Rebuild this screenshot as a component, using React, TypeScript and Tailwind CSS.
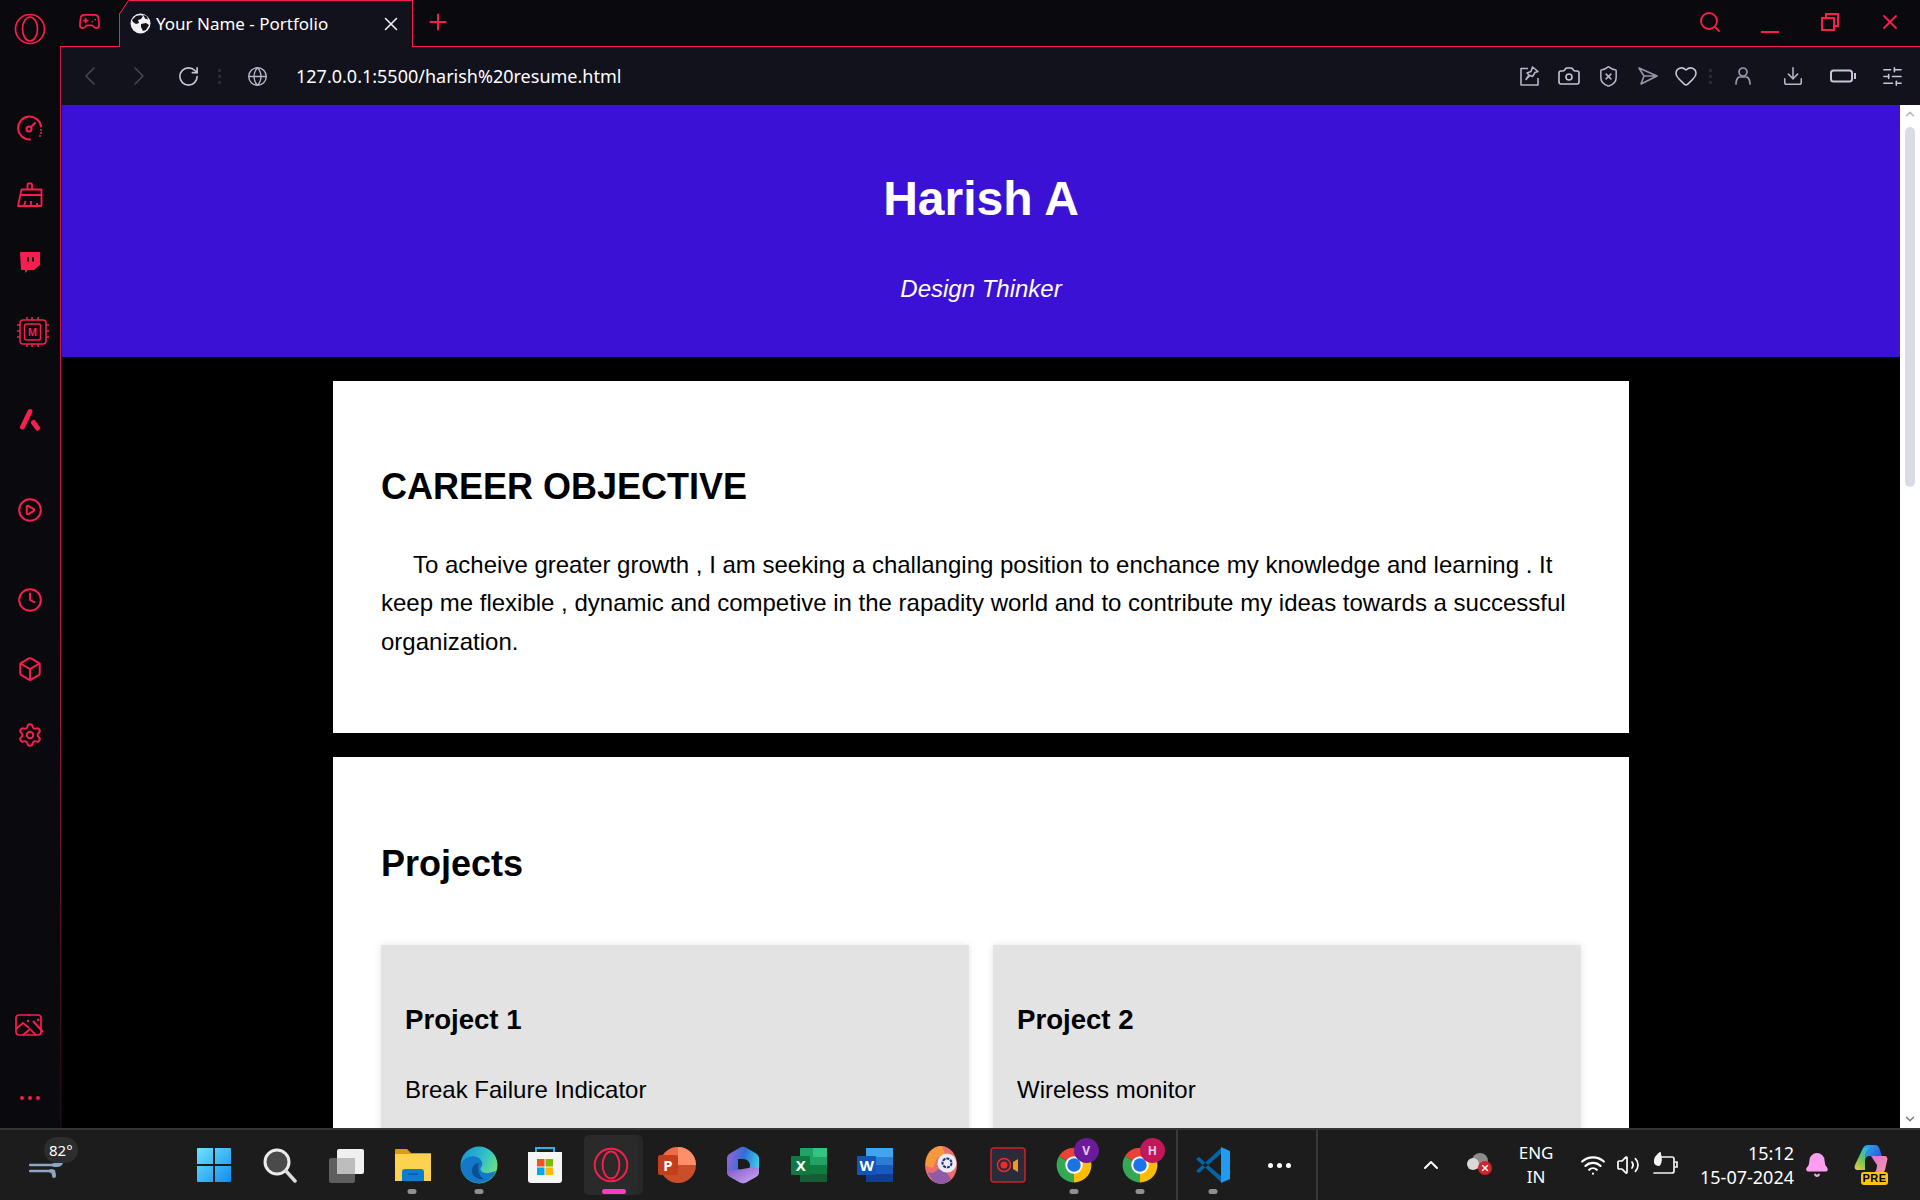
import React from 'react';
import {
  Clock, Box, Settings, CirclePlay, Camera, ShieldX, Heart, Download, SlidersHorizontal,
  ChevronLeft, ChevronRight, RotateCw, Globe, X, Plus, Search, Gamepad2, ChevronUp, ChevronDown,
  Wifi, Volume2, Bell,
} from 'lucide-react';

const RED = '#fa1e4e';

const OperaLogo: React.FC<{ size?: number }> = ({ size = 32 }) => (
  <svg width={size} height={size} viewBox="0 0 32 32" fill="none" stroke={RED} strokeWidth="1.7">
    <circle cx="16" cy="16" r="14.5" />
    <ellipse cx="16" cy="16" rx="7.5" ry="12" />
  </svg>
);

const GaugeIcon = () => (
  <svg width="26" height="26" viewBox="0 0 26 26" fill="none" stroke={RED} strokeWidth="2" strokeLinecap="round">
    <path d="M24 11.500A11.500 11.500 0 1 0 13 24.500" />
    <circle cx="12" cy="14" r="2.500" />
    <path d="M14 12l4-4" />
    <path d="M24 15v.1M24 18v.1M23 21v.1" />
  </svg>
);

const Brush = () => (
  <svg width="26" height="26" viewBox="0 0 26 26" fill="none" stroke={RED} strokeWidth="1.800" strokeLinejoin="round">
    <path d="M10.500 7V2.500a1 1 0 0 1 1-1h2.500a1 1 0 0 1 1 1V7" />
    <path d="M4.500 7.500H24.500V23a1 1 0 0 1-1 1H1z" />
    <path d="M4 13h20M7 24l1.500-5M14 24v-5M20 24v-3" />
  </svg>
);

const TwitchIcon = () => (
  <svg width="24" height="24" viewBox="0 0 24 24">
    <path fill={RED} d="M2 2h20v13l-6 5h-6l-3 3v-3H3z" />
    <path stroke="#09090e" strokeWidth="2" d="M10 7v4.500M15 7v4.500" />
  </svg>
);

const ChipIcon = () => (
  <div className="relative ml-[5px] w-[32px] h-[30px] flex items-center justify-center">
    <svg className="absolute inset-0" width="32" height="30" viewBox="0 0 32 30" fill="none" stroke={RED} strokeWidth="1.500">
      <rect x="3" y="3" width="26" height="24" rx="3" />
      <rect x="7.500" y="7" width="16" height="16" rx="2" />
      <path d="M10 0v3M15 0v3M21 0v3M10 27v3M15 27v3M21 27v3M0 8h3M0 14h3M0 20h3M29 8h3M29 14h3M29 20h3" />
    </svg>
    <span className="relative text-[10px] font-bold text-[#fa1e4e] leading-none">M</span>
  </div>
);

const AriaIcon = () => (
  <svg width="24" height="24" viewBox="0 0 24 24" fill="none" stroke={RED} strokeWidth="5" strokeLinecap="round">
    <path d="M12 3.500 4.500 19" />
    <path d="M15.500 14.500 19.500 20" />
  </svg>
);

const GalleryIcon = () => (
  <svg width="30" height="24" viewBox="0 0 30 24" fill="none" stroke={RED} strokeWidth="1.700" strokeLinejoin="round">
    <rect x="1" y="2" width="25" height="20" rx="3" />
    <path d="M1 16l7-6 6 5M8 22l7-6 6 6" />
    <path d="M18 8l10 11" strokeWidth="2" />
    <circle cx="14" cy="2" r="1" fill={RED} stroke="none" />
    <circle cx="23" cy="7" r="1.200" fill={RED} stroke="none" />
    <circle cx="13" cy="8" r="1.200" fill={RED} stroke="none" />
  </svg>
);

const Rail = () => (
  <div className="w-[62px] shrink-0 flex bg-[#09090e]">
    <div className="w-[60px] flex flex-col items-center text-[#fa1e4e]">
      <div className="mt-[69px] h-[24px] flex items-center"><GaugeIcon /></div>
      <div className="mt-[43px] h-[24px] flex items-center"><Brush /></div>
      <div className="mt-[43px] h-[24px] flex items-center"><TwitchIcon /></div>
      <div className="mt-[46px] h-[24px] flex items-center"><ChipIcon /></div>
      <div className="mt-[64px] h-[24px] flex items-center"><AriaIcon /></div>
      <div className="mt-[66px] h-[24px] flex items-center"><CirclePlay size={26} strokeWidth={1.8} /></div>
      <div className="mt-[66px] h-[24px] flex items-center"><Clock size={26} strokeWidth={1.8} /></div>
      <div className="mt-[45px] h-[24px] flex items-center"><Box size={26} strokeWidth={1.8} /></div>
      <div className="mt-[42px] h-[24px] flex items-center"><Settings size={26} strokeWidth={1.8} /></div>
      <div className="mt-[266px] h-[24px] flex items-center"><GalleryIcon /></div>
      <div className="mt-[49px] h-[24px] flex items-center gap-[4px]">
        <span className="w-[4px] h-[4px] rounded-full bg-[#fa1e4e]" />
        <span className="w-[4px] h-[4px] rounded-full bg-[#fa1e4e]" />
        <span className="w-[4px] h-[4px] rounded-full bg-[#fa1e4e]" />
      </div>
    </div>
    <div className="w-px bg-gradient-to-b from-[#c8173f] via-[#c8173f] to-[#1a0a12]" />
  </div>
);

const TabGlobe = () => (
  <svg width="21" height="21" viewBox="0 0 21 21">
    <circle cx="10.500" cy="10.500" r="10" fill="#f1f1f3" />
    <path fill="#12121c" d="M6 3c3-1 6-1 7 0l-2 3-3 1 1 3-3 1-3-2-1-2zM11 11l5-1 3 2-3 5-3 1-2-4zM13 1.500l4 2 1 3-3-1z" />
  </svg>
);

const TopBar = () => (
  <div className="h-[47px] flex bg-[#09090e] shrink-0">
    <div className="w-[60px] shrink-0 pt-[13px] pl-[14px]"><OperaLogo /></div>
    <div className="flex-1 flex border-b border-[#fa1e4e]">
      <div className="w-[59px] shrink-0 flex justify-center pt-[10px]">
        <Gamepad2 size={23} strokeWidth={1.8} className="text-[#fa1e4e]" />
      </div>
      <div className="relative w-[294px] h-[47px] shrink-0 flex items-center bg-[#12121c] border-l border-r border-t border-[#fa1e4e] pb-[1px] pl-[10px] pr-[10px] font-['Noto_Sans',sans-serif]">
        <svg className="absolute -left-px -top-px" width="11" height="15" viewBox="0 0 11 15">
          <path d="M0 0h10L0 14z" fill="#09090e" />
          <path d="M.5 14 9.500.5" stroke={RED} fill="none" />
        </svg>
        <TabGlobe />
        <span className="ml-[5px] text-[17px] text-white leading-none flex-1 whitespace-nowrap">Your Name - Portfolio</span>
        <X size={22} strokeWidth={1.7} className="text-[#f1f1f3]" />
      </div>
      <div className="w-[49px] shrink-0 flex justify-center pt-[9px]">
        <Plus size={26} strokeWidth={1.8} className="text-[#fa1e4e]" />
      </div>
      <div className="flex-1" />
      <div className="flex items-center pb-[2px] text-[#fa1e4e] pr-[18px] gap-[36px]">
        <Search size={24} strokeWidth={1.8} />
        <div className="w-[24px] h-[24px] flex items-end justify-center pb-[1px]"><div className="w-[18px] h-[2px] bg-[#fa1e4e]" /></div>
        <svg width="24" height="24" viewBox="0 0 24 24" fill="none" stroke={RED} strokeWidth="2">
          <rect x="4" y="8" width="12" height="12" />
          <path d="M8 8V4h12v12h-4" />
        </svg>
        <X size={24} strokeWidth={1.8} />
      </div>
    </div>
  </div>
);

const PinIcon = () => (
  <svg width="22" height="22" viewBox="0 0 22 22" fill="none" stroke="#b9b3c8" strokeWidth="1.600" strokeLinejoin="round">
    <path d="M9 3.500H2v16.500h17v-7" />
    <path d="M13.500 2l5.500 4.500-3 1-2.500 4-2.500-1-4 4 3-4.500-2-2 4-1.500z" />
  </svg>
);

const SendIcon = () => (
  <svg width="22" height="22" viewBox="0 0 22 22" fill="none" stroke="#9b95aa" strokeWidth="1.600" strokeLinejoin="round">
    <path d="M2 3l18 8-16 8 3-8zM7 11h13" />
  </svg>
);

const PersonIcon = () => (
  <svg width="18" height="20" viewBox="0 0 18 20" fill="none" stroke="#9b95aa" strokeWidth="1.700">
    <circle cx="9" cy="6" r="4" />
    <path d="M2 18c0-5 3-7 3-7h8s3 2 3 7" strokeLinecap="round" />
  </svg>
);

const BatteryOutline = () => (
  <svg width="26" height="14" viewBox="0 0 26 14" fill="none" stroke="#c9c4d6" strokeWidth="2">
    <rect x="1" y="1.500" width="21" height="11" rx="2.500" />
    <path d="M25 4v6" />
  </svg>
);

const DotSep = () => (
  <div className="flex flex-col gap-[3px]">
    <span className="w-[3px] h-[3px] bg-[#2a2a36]" />
    <span className="w-[3px] h-[3px] bg-[#2a2a36]" />
    <span className="w-[3px] h-[3px] bg-[#2a2a36]" />
  </div>
);

const AddressBar = () => (
  <div className="h-[58px] shrink-0 flex items-center bg-[#12121c] text-[#b9b3c8]">
    <ChevronLeft size={32} strokeWidth={1.2} className="ml-[12px] text-[#4a4754]" />
    <ChevronRight size={32} strokeWidth={1.2} className="ml-[17px] text-[#4a4754]" />
    <RotateCw size={23} strokeWidth={1.7} className="ml-[22px] text-[#c9c4d6]" />
    <div className="ml-[18px]"><DotSep /></div>
    <Globe size={21} strokeWidth={1.6} className="ml-[26px]" />
    <span className="ml-[28px] text-[18px] leading-none text-white font-['Noto_Sans',sans-serif] whitespace-nowrap">127.0.0.1:5500/harish%20resume.html</span>
    <div className="flex-1" />
    <PinIcon />
    <Camera size={24} strokeWidth={1.6} className="ml-[16px] text-[#c9c4d6]" />
    <ShieldX size={23} strokeWidth={1.6} className="ml-[16px]" />
    <div className="ml-[17px]"><SendIcon /></div>
    <Heart size={24} strokeWidth={1.6} className="ml-[15px] text-[#c9c4d6]" />
    <div className="ml-[11px]"><DotSep /></div>
    <div className="ml-[22px]"><PersonIcon /></div>
    <Download size={22} strokeWidth={1.7} className="ml-[30px]" />
    <div className="ml-[26px]"><BatteryOutline /></div>
    <SlidersHorizontal size={23} strokeWidth={1.6} className="ml-[25px] mr-[16px] text-[#c9c4d6]" />
  </div>
);

const ProjectCard: React.FC<{ title: string; text: string }> = ({ title, text }) => (
  <div className="bg-[#e3e3e3] shadow-[0_0_8px_rgba(0,0,0,0.1)] pt-[59px] px-[24px] pb-[48px]">
    <h3 className="text-[27.6px] leading-[32px] font-bold">{title}</h3>
    <p className="mt-[35px] text-[24px] leading-[38.4px]">{text}</p>
  </div>
);

const Page = () => (
  <div className="flex-1 min-w-0 overflow-hidden bg-black text-black font-['Liberation_Sans',Arial,sans-serif]">
    <header className="h-[252px] bg-[#3c11d6] text-white text-center pt-[66px]">
      <h1 className="text-[48px] leading-[55px] font-bold">Harish A</h1>
      <p className="mt-[49px] text-[24px] leading-[27px] italic">Design Thinker</p>
    </header>
    <main className="w-[1296px] mx-auto pt-[24px]">
      <section className="h-[352px] bg-white px-[48px] pt-[85px]">
        <h2 className="text-[36px] leading-[41px] font-bold">CAREER OBJECTIVE</h2>
        <p className="mt-[39px] text-[24px] leading-[38.4px] indent-[32px]">
          To acheive greater growth , I am seeking a challanging position to enchance my knowledge and learning . It keep me flexible , dynamic and competive in the rapadity world and to contribute my ideas towards a successful organization.
        </p>
      </section>
      <section className="mt-[24px] bg-white px-[48px] pt-[86px] pb-[48px]">
        <h2 className="text-[36px] leading-[41px] font-bold">Projects</h2>
        <div className="mt-[61px] grid grid-cols-2 gap-[24px]">
          <ProjectCard title="Project 1" text="Break Failure Indicator" />
          <ProjectCard title="Project 2" text="Wireless monitor" />
        </div>
      </section>
    </main>
  </div>
);

const Scrollbar = () => (
  <div className="w-[20px] shrink-0 bg-white flex flex-col items-center">
    <ChevronUp size={14} strokeWidth={2.5} className="mt-[2px] text-[#b5b5b5]" />
    <div className="mt-[6px] w-[10px] h-[360px] rounded-full bg-[#dadce3]" />
    <div className="flex-1" />
    <ChevronDown size={14} strokeWidth={2.5} className="mb-[2px] text-[#7a7a7a]" />
  </div>
);

/* taskbar icons */
const WinLogo = () => (
  <svg width="36" height="36" viewBox="0 0 36 36">
    <defs>
      <linearGradient id="win" x1="0" y1="0" x2="1" y2="1">
        <stop offset="0" stopColor="#6fe3fb" />
        <stop offset="1" stopColor="#0f8df0" />
      </linearGradient>
    </defs>
    <path fill="url(#win)" d="M1 2a1 1 0 0 1 1-1h15v16H1zM19 1h15a1 1 0 0 1 1 1v15H19zM1 19h16v16H2a1 1 0 0 1-1-1zM19 19h16v15a1 1 0 0 1-1 1H19z" />
  </svg>
);

const TaskSearch = () => (
  <svg width="36" height="36" viewBox="0 0 36 36" fill="none">
    <circle cx="15" cy="15" r="12" fill="#4a4a4a" stroke="#ececec" strokeWidth="3" />
    <path d="M24 24l9 10" stroke="#dcdcdc" strokeWidth="3.500" strokeLinecap="round" />
  </svg>
);

const TaskView = () => (
  <svg width="36" height="36" viewBox="0 0 36 36">
    <rect x="1" y="11" width="26" height="25" rx="2" fill="#5e5e5e" />
    <rect x="9" y="2" width="27" height="25" rx="2" fill="#f0f0f0" />
    <rect x="9" y="11" width="18" height="16" fill="#bdbdbd" />
  </svg>
);

const Explorer = () => (
  <svg width="38" height="34" viewBox="0 0 38 34" className="ml-[2px]">
    <path fill="#d99c0f" d="M1 2a1 1 0 0 1 1-1h11l4 4h20v6H1z" />
    <path fill="#fdd24f" d="M1 6h36v27H1z" />
    <path fill="#0f7ccc" d="M8 33V24a3 3 0 0 1 3-3h16a3 3 0 0 1 3 3v9z" />
    <path stroke="#0b5a99" strokeWidth="1.500" d="M14 26h10" />
  </svg>
);

const EdgeIcon = () => (
  <svg width="38" height="38" viewBox="0 0 38 38">
    <defs>
      <linearGradient id="edge1" x1="0" y1="0" x2="1" y2="0.600">
        <stop offset="0" stopColor="#0e8fd6" />
        <stop offset="0.600" stopColor="#34c1c9" />
        <stop offset="1" stopColor="#6fe07a" />
      </linearGradient>
    </defs>
    <circle cx="19" cy="19" r="18.500" fill="url(#edge1)" />
    <path fill="#1478c8" d="M1 19c2-8 12-11 18-7 4 3 4 7 2 9-2 3 1 7 8 6l7-2c-3 8-10 12-17 12C10 37 0 29 1 19z" />
    <path fill="#0d4f94" d="M19 17c-5 0-8 5-7 10 2 5 8 7 12 6-5-3-7-9-5-16z" />
  </svg>
);

const StoreIcon = () => (
  <svg width="36" height="38" viewBox="0 0 36 38">
    <path d="M9 8V2h18v6" fill="none" stroke="#2db3e8" strokeWidth="2" />
    <path fill="#f5f5f5" d="M1 6h34v28a3 3 0 0 1-3 3H4a3 3 0 0 1-3-3z" />
    <rect x="10" y="13" width="7.500" height="7.500" fill="#f05423" />
    <rect x="18.500" y="13" width="7.500" height="7.500" fill="#82bb06" />
    <rect x="10" y="21.500" width="7.500" height="7.500" fill="#05a6f0" />
    <rect x="18.500" y="21.500" width="7.500" height="7.500" fill="#ffba08" />
  </svg>
);

const Ppt = () => (
  <div className="relative w-[38px] h-[38px]">
    <svg width="38" height="38" viewBox="0 0 38 38" className="absolute inset-0">
      <circle cx="20" cy="19" r="18" fill="#c94f2a" />
      <path fill="#ff8f6b" d="M20 1a18 18 0 0 1 18 18H20z" />
      <path fill="#ed6c47" d="M20 1A18 18 0 0 0 2 19h18z" />
    </svg>
    <div className="absolute left-0 top-[9px] w-[20px] h-[20px] bg-[#c43e1c] rounded-[2px] flex items-center justify-center text-white text-[15px] font-bold leading-none">P</div>
  </div>
);

const M365 = () => (
  <svg width="32" height="38" viewBox="0 0 32 38">
    <defs>
      <linearGradient id="m1" x1="0" y1="0.200" x2="1" y2="0.500">
        <stop offset="0" stopColor="#9a63d8" />
        <stop offset="0.500" stopColor="#2f6fd8" />
        <stop offset="1" stopColor="#3fd0e8" />
      </linearGradient>
      <linearGradient id="m2" x1="0" y1="0" x2="1" y2="1">
        <stop offset="0" stopColor="#7a52c8" />
        <stop offset="1" stopColor="#d0aaf0" />
      </linearGradient>
    </defs>
    <path fill="url(#m1)" d="M13 1.500c2-1 4-1 6 0l10 6c2 1 3 3 3 5v13c0 2-1 4-3 5l-10 6c-2 1-4 1-6 0l-10-6c-2-1-3-3-3-5V12.500c0-2 1-4 3-5z" />
    <path fill="#1c1c1c" d="M11 13h5c4 0 7 3 7 6.500S20 26 16 25l-5-2z" />
    <path fill="url(#m2)" d="M0 20c1 4 5 5 9 4l7-1c5-1 10-3 16-1v4c0 2-1 4-3 5l-10 5.500c-2 1-4 1-6 0L3 31c-2-1-3-3-3-5z" />
  </svg>
);

const Excel = () => (
  <div className="relative w-[36px] h-[36px]">
    <svg width="36" height="36" viewBox="0 0 36 36" className="absolute inset-0">
      <rect x="9" y="1" width="27" height="34" rx="1" fill="#21a366" />
      <rect x="22" y="1" width="14" height="9" fill="#33c481" />
      <rect x="9" y="18" width="27" height="9" fill="#107c41" />
      <rect x="9" y="27" width="27" height="8" fill="#185c37" />
    </svg>
    <div className="absolute left-0 top-[9px] w-[19px] h-[19px] bg-[#0e7a3f] rounded-[1px] flex items-center justify-center text-white text-[15px] font-bold leading-none">X</div>
  </div>
);

const Word = () => (
  <div className="relative w-[36px] h-[36px]">
    <svg width="36" height="36" viewBox="0 0 36 36" className="absolute inset-0">
      <rect x="9" y="1" width="27" height="34" rx="1" fill="#2b7cd3" />
      <rect x="9" y="1" width="27" height="9" fill="#41a5ee" />
      <rect x="9" y="18" width="27" height="9" fill="#185abd" />
      <rect x="9" y="27" width="27" height="8" fill="#103f91" />
    </svg>
    <div className="absolute left-0 top-[9px] w-[19px] h-[19px] bg-[#1254b8] rounded-[1px] flex items-center justify-center text-white text-[15px] font-bold leading-none">W</div>
  </div>
);

const Irctc = () => (
  <svg width="32" height="38" viewBox="0 0 32 38">
    <ellipse cx="16" cy="19" rx="16" ry="19" fill="#ef6c6c" />
    <path fill="#f59a3c" d="M1 14C3 5 10 0 17 0l3 8-8 4-4 10-7-2z" />
    <path fill="#8f5aa8" d="M3 26c6 3 10-2 13-8l10 15c-3 3-6 5-10 5-6 0-11-5-13-12z" />
    <path fill="#7cc7a0" d="M12 18l6-8 4 2-8 12z" />
    <circle cx="22" cy="17" r="9.500" fill="#ececf2" />
    <circle cx="22" cy="17" r="4.500" fill="none" stroke="#1f2a8a" strokeWidth="2" strokeDasharray="3 1" />
  </svg>
);

const Recorder = () => (
  <svg width="36" height="36" viewBox="0 0 36 36">
    <rect x="1" y="1" width="34" height="34" rx="3" fill="#2b2a38" stroke="#d11f2a" strokeWidth="1.500" />
    <circle cx="14" cy="18" r="6.500" fill="none" stroke="#ee2b2b" strokeWidth="1.500" />
    <circle cx="14" cy="18" r="3.500" fill="#ee2b2b" />
    <path fill="#f29a1f" d="M23 15l5-3v13l-5-3z" />
  </svg>
);

const ChromeIcon: React.FC<{ letter: string; color: string }> = ({ letter, color }) => (
  <div className="relative w-[38px] h-[38px]">
    <svg width="38" height="38" viewBox="0 0 48 48" className="absolute inset-0">
      <path fill="#ea4335" d="M24 24 5 13a22 22 0 0 1 38 0z" />
      <path fill="#fbbc04" d="M24 24 43 13a22 22 0 0 1-19 33z" />
      <path fill="#34a853" d="M24 24v22A22 22 0 0 1 5 13z" />
      <circle cx="24" cy="24" r="11" fill="#fff" />
      <circle cx="24" cy="24" r="8.500" fill="#1a73e8" />
    </svg>
    <div className={`absolute left-[19px] -top-[8px] w-[25px] h-[25px] rounded-full ${color} flex items-center justify-center text-[12px] font-bold text-[#e8c9ea] leading-none font-['Noto_Sans',sans-serif]`}>{letter}</div>
  </div>
);

const VsCode = () => (
  <svg width="36" height="38" viewBox="0 0 36 38">
    <path fill="#0065a9" d="M1 13l3-2 25 22-3 3zM1 25l3 2L29 5l-3-3z" />
    <path fill="#1f9cf0" d="M26 1l9 4v28l-9 4z" />
  </svg>
);

const Slot: React.FC<{ children: React.ReactNode; dot?: boolean }> = ({ children, dot }) => (
  <div className="relative w-[66.13px] h-[70px] flex items-center justify-center shrink-0">
    {children}
    {dot && <span className="absolute bottom-[6px] left-1/2 -translate-x-1/2 w-[9px] h-[5px] rounded-full bg-[#8f8f8f]" />}
  </div>
);

const WeatherIcon = () => (
  <svg width="36" height="26" viewBox="0 0 36 26" fill="none" stroke="#8aa6c4" strokeWidth="2.500" strokeLinecap="round">
    <path d="M1 10h24M1 16h24" />
    <path d="M25 10h4a3 3 0 0 0 3-3M22 16c2 0 3 2 3 5" strokeWidth="4" />
  </svg>
);

const Leaf = () => (
  <svg width="26" height="26" viewBox="0 0 26 26" fill="none" stroke="#f2f2f2" strokeWidth="1.700" strokeLinecap="round">
    <path d="M9 5h11a2 2 0 0 1 2 2v12a2 2 0 0 1-2 2H2" />
    <path d="M23 10h2v5h-2" />
    <path fill="#f2f2f2" d="M8 1c-4 3-6 6-5 10 1 2 4 3 5 1 2-3 1-7 0-11z" />
  </svg>
);

const CloudX = () => (
  <div className="relative w-[26px] h-[26px]">
    <svg width="22" height="18" viewBox="0 0 22 18" className="absolute left-0 top-[1px]">
      <circle cx="13" cy="8" r="8" fill="#8c8c8c" />
      <circle cx="6" cy="11" r="6" fill="#d8d8d8" />
    </svg>
    <div className="absolute left-[11px] top-[9px] w-[14px] h-[14px] rounded-full bg-[#d32029] flex items-center justify-center">
      <X size={10} strokeWidth={3.5} className="text-white" />
    </div>
  </div>
);

const CopilotPre = () => (
  <div className="relative w-[36px] h-[40px]">
    <svg width="36" height="32" viewBox="0 0 36 32" className="absolute left-0 top-0">
      <defs>
        <linearGradient id="cp1" x1="0" y1="0" x2="1" y2="0.500">
          <stop offset="0" stopColor="#2fb6f0" />
          <stop offset="1" stopColor="#2a5bd8" />
        </linearGradient>
        <linearGradient id="cp2" x1="0" y1="1" x2="0.600" y2="0">
          <stop offset="0" stopColor="#f7c83a" />
          <stop offset="0.600" stopColor="#5fc45e" />
          <stop offset="1" stopColor="#2fb6f0" />
        </linearGradient>
        <linearGradient id="cp3" x1="0" y1="0" x2="1" y2="1">
          <stop offset="0" stopColor="#e26fd0" />
          <stop offset="1" stopColor="#f59aa8" />
        </linearGradient>
      </defs>
      <path fill="url(#cp2)" d="M10 3h8c-5 2-6 7-6 13v9H5c-3 0-4-2-3-5z" />
      <path fill="url(#cp1)" d="M10 3c1-2 3-3 5-3h7c3 0 4 2 5 5l2 6H16c-2 0-4 2-4 5 0-6 1-11 6-13z" />
      <path fill="url(#cp3)" d="M18 11h13c3 0 4 2 3 5l-2 9c-1 3-3 4-6 4h-6c3-2 4-5 4-9z" />
    </svg>
    <div className="absolute left-[8px] bottom-0 w-[27px] h-[13px] rounded-[3px] bg-[#ffc20e] flex items-center justify-center text-[11px] font-bold text-black leading-none font-['Liberation_Sans',sans-serif] tracking-[0.5px]">PRE</div>
  </div>
);

const Taskbar = () => (
  <div className="h-[72px] shrink-0 flex bg-[#1c1c1c] border-t-2 border-[#353535] text-white font-['Noto_Sans',sans-serif]">
    <div className="relative w-[181px] shrink-0 flex items-center pl-[29px] pt-[6px]">
      <WeatherIcon />
      <div className="absolute left-[44px] top-[7px] h-[26px] px-[5px] rounded-full bg-[#2d2d2d] flex items-center text-[15px] leading-none">82°</div>
    </div>
    <Slot><WinLogo /></Slot>
    <Slot><TaskSearch /></Slot>
    <Slot><TaskView /></Slot>
    <Slot dot><Explorer /></Slot>
    <Slot dot><EdgeIcon /></Slot>
    <Slot><StoreIcon /></Slot>
    <Slot>
      <div className="relative w-[54px] h-[60px] rounded-[5px] bg-[#2a2a2a] flex items-center justify-center shadow-[5px_0_0_#262626]">
        <OperaLogo size={36} />
        <span className="absolute bottom-[1px] left-[18px] w-[24px] h-[5px] rounded-full bg-[#f43fbf]" />
      </div>
    </Slot>
    <Slot><Ppt /></Slot>
    <Slot><M365 /></Slot>
    <Slot><Excel /></Slot>
    <Slot><Word /></Slot>
    <Slot><Irctc /></Slot>
    <Slot><Recorder /></Slot>
    <Slot dot><ChromeIcon letter="V" color="bg-[#6a1b9a]" /></Slot>
    <Slot dot><ChromeIcon letter="H" color="bg-[#c2185b]" /></Slot>
    <div className="w-[2px] ml-[3px] bg-[#3a3a3a] shrink-0" />
    <div className="ml-[2px]"><Slot dot><VsCode /></Slot></div>
    <Slot>
      <div className="flex gap-[4px]">
        <span className="w-[5px] h-[5px] rounded-full bg-white" />
        <span className="w-[5px] h-[5px] rounded-full bg-white" />
        <span className="w-[5px] h-[5px] rounded-full bg-white" />
      </div>
    </Slot>
    <div className="w-[2px] ml-[4px] bg-[#3a3a3a] shrink-0" />
    <div className="flex-1 flex items-center pr-[31px]">
      <ChevronUp size={24} strokeWidth={2} className="ml-[101px] text-white" />
      <div className="ml-[24px]"><CloudX /></div>
      <div className="ml-[25px] w-[36px] text-center text-[17px] leading-[24px] whitespace-nowrap"><div className="-mx-[4px]">ENG</div><div>IN</div></div>
      <Wifi size={26} strokeWidth={2} className="ml-[26px]" />
      <Volume2 size={24} strokeWidth={1.7} className="ml-[10px]" />
      <div className="ml-[12px]"><Leaf /></div>
      <div className="flex-1 text-right text-[18px] leading-[24px] whitespace-nowrap"><div>15:12</div><div>15-07-2024</div></div>
      <Bell size={26} className="ml-[10px] text-[#ff9ef0] fill-[#ff9ef0]" />
      <div className="ml-[23px]"><CopilotPre /></div>
    </div>
  </div>
);

export default function App() {
  return (
    <div className="w-[1920px] h-[1200px] overflow-hidden flex flex-col bg-black">
      <TopBar />
      <div className="flex-1 min-h-0 flex">
        <Rail />
        <div className="flex-1 min-w-0 flex flex-col">
          <AddressBar />
          <div className="flex-1 min-h-0 flex">
            <Page />
            <Scrollbar />
          </div>
        </div>
      </div>
      <Taskbar />
    </div>
  );
}
